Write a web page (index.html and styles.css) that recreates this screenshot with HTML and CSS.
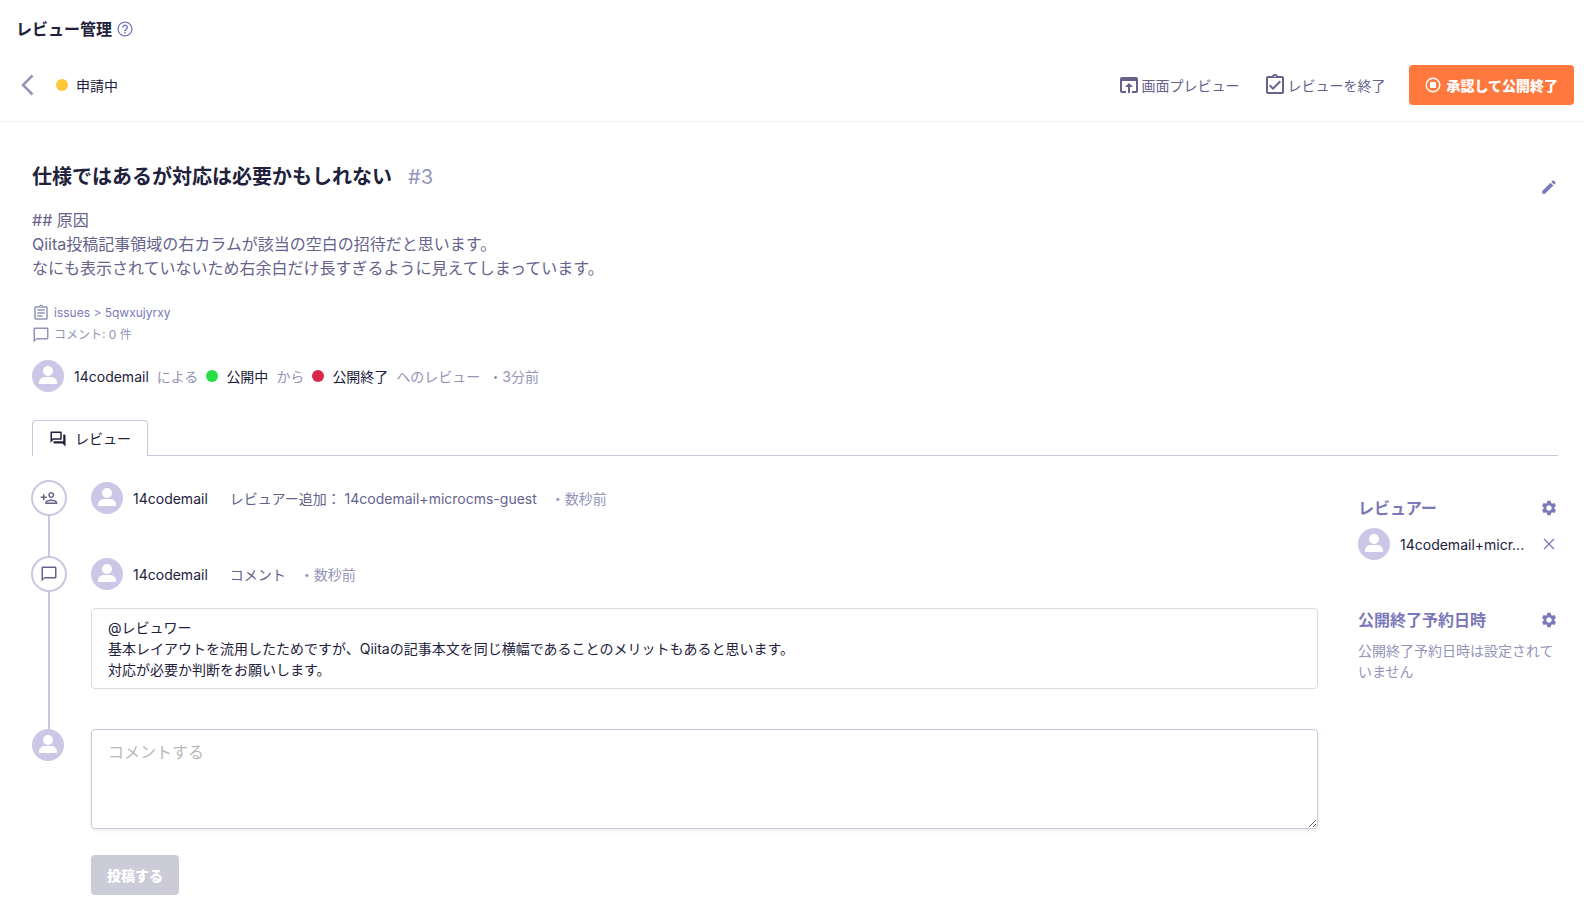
FILE: index.html
```html
<!DOCTYPE html>
<html lang="ja">
<head>
    <meta charset="UTF-8">
    <meta name="viewport" content="width=device-width, initial-scale=1.0">
    <title>レビュー管理</title>
    <link rel="stylesheet" href="styles.css">
</head>
<body>
    <svg class="sprite" aria-hidden="true">
        <symbol id="avatar" viewBox="0 0 32 32">
            <circle cx="16" cy="16" r="16" fill="#cac8e6"/>
            <circle cx="16" cy="11" r="5" fill="#fff"/>
            <path fill="#fff" d="M7 24v-1.5c0-3.5 3-5.5 6.5-5.5h5c3.5 0 6.5 2 6.5 5.5V24z"/>
        </symbol>
        <symbol id="chat" viewBox="0 0 24 24">
            <path d="M20 2H4c-1.1 0-2 .9-2 2v18l4-4h14c1.1 0 2-.9 2-2V4c0-1.1-.9-2-2-2zm0 14H6l-2 2V4h16v12z"/>
        </symbol>
        <symbol id="gear" viewBox="0 0 24 24">
            <path d="M19.14 12.94c.04-.3.06-.61.06-.94 0-.32-.02-.64-.07-.94l2.03-1.58c.18-.14.23-.41.12-.61l-1.92-3.32c-.12-.22-.37-.29-.59-.22l-2.39.96c-.5-.38-1.03-.7-1.62-.94l-.36-2.54c-.04-.24-.24-.41-.48-.41h-3.84c-.24 0-.43.17-.47.41l-.36 2.54c-.59.24-1.13.57-1.62.94l-2.39-.96c-.22-.08-.47 0-.59.22L2.74 8.87c-.12.21-.08.47.12.61l2.03 1.58c-.05.3-.09.63-.09.94s.02.64.07.94l-2.03 1.58c-.18.14-.23.41-.12.61l1.92 3.32c.12.22.37.29.59.22l2.39-.96c.5.38 1.03.7 1.62.94l.36 2.54c.05.24.24.41.48.41h3.84c.24 0 .44-.17.47-.41l.36-2.54c.59-.24 1.13-.56 1.62-.94l2.39.96c.22.08.47 0 .59-.22l1.92-3.32c.12-.22.07-.47-.12-.61l-2.01-1.58zM12 15.6c-1.98 0-3.6-1.62-3.6-3.6s1.62-3.6 3.6-3.6 3.6 1.62 3.6 3.6-1.62 3.6-3.6 3.6z"/>
        </symbol>
    </svg>

    <header class="page-header">
        <h1 class="page-title">レビュー管理</h1>
        <a href="#" class="help" aria-label="ヘルプ">
            <svg class="icon" viewBox="0 0 24 24"><path d="M11 18h2v-2h-2v2zm1-16C6.48 2 2 6.48 2 12s4.48 10 10 10 10-4.48 10-10S17.52 2 12 2zm0 18.3c-4.6 0-8.3-3.7-8.3-8.3S7.4 3.7 12 3.7s8.3 3.7 8.3 8.3-3.7 8.3-8.3 8.3zm0-14.3c-2.21 0-4 1.79-4 4h2c0-1.1.9-2 2-2s2 .9 2 2c0 2-3 1.75-3 5h2c0-2.25 3-2.5 3-5 0-2.21-1.79-4-4-4z"/></svg>
        </a>
    </header>

    <div class="toolbar">
        <div class="toolbar-left">
            <button type="button" class="back" aria-label="戻る">
                <svg width="24" height="24" viewBox="0 0 24 24"><path d="M16.500 2.500L7 12l9.500 9.500" fill="none" stroke="currentColor" stroke-width="2.500"/></svg>
            </button>
            <span class="dot yellow"></span>
            <span>申請中</span>
        </div>
        <div class="toolbar-right">
            <button type="button" class="text-button">
                <svg class="icon-large" viewBox="0 0 24 24"><path d="M19 4H5c-1.11 0-2 .9-2 2v12c0 1.1.89 2 2 2h4v-2H5V8h14v10h-4v2h4c1.1 0 2-.9 2-2V6c0-1.1-.89-2-2-2zm-7 6l-4 4h3v6h2v-6h3l-4-4z"/></svg>画面プレビュー
            </button>
            <button type="button" class="text-button">
                <svg class="icon-large" viewBox="0 0 24 24"><path d="M18 9l-1.41-1.42L10 14.17l-2.59-2.58L6 13l4 4zm1-6h-4.18C14.4 1.84 13.3 1 12 1s-2.4.84-2.82 2H5c-1.1 0-2 .9-2 2v14c0 1.1.9 2 2 2h14c1.1 0 2-.9 2-2V5c0-1.1-.9-2-2-2zm-7-.25c.41 0 .75.34.75.75s-.34.75-.75.75-.75-.34-.75-.75.34-.75.75-.75zM19 19H5V5h14v14z"/></svg>レビューを終了
            </button>
            <button type="button" class="button primary">
                <svg width="16" height="16" viewBox="0 0 16 16"><circle cx="8" cy="8" r="6.8" fill="none" stroke="currentColor" stroke-width="1.4"/><rect x="5" y="5" width="6" height="6" rx="0.5" fill="currentColor"/></svg>承認して公開終了
            </button>
        </div>
    </div>

    <main class="main">
        <div class="review-head">
            <div>
                <h2 class="review-title">仕様ではあるが対応は必要かもしれない <span class="number">#3</span></h2>
                <p class="description">## 原因<br>Qiita投稿記事領域の右カラムが該当の空白の招待だと思います。<br>なにも表示されていないため右余白だけ長すぎるように見えてしまっています。</p>
            </div>
            <button type="button" class="edit" aria-label="編集">
                <svg class="icon" viewBox="0 0 24 24"><path d="M3 17.25V21h3.75L17.81 9.94l-3.75-3.75L3 17.25zM20.71 7.04c.39-.39.39-1.02 0-1.41l-2.34-2.34c-.39-.39-1.02-.39-1.41 0l-1.83 1.83 3.75 3.75 1.83-1.83z"/></svg>
            </button>
        </div>

        <div class="meta">
            <div class="meta-row">
                <svg class="icon" viewBox="0 0 24 24"><path d="M7 15h7v2H7zm0-4h10v2H7zm0-4h10v2H7zM19 3h-4.18C14.4 1.84 13.3 1 12 1s-2.4.84-2.82 2H5c-1.1 0-2 .9-2 2v14c0 1.1.9 2 2 2h14c1.1 0 2-.9 2-2V5c0-1.1-.9-2-2-2zm-7-.25c.41 0 .75.34.75.75s-.34.75-.75.75-.75-.34-.75-.75.34-.75.75-.75zM19 19H5V5h14v14z"/></svg>
                <a href="#">issues &gt; 5qwxujyrxy</a>
            </div>
            <div class="meta-row">
                <svg class="icon"><use href="#chat"/></svg>
                <span>コメント: 0 件</span>
            </div>
        </div>

        <div class="summary">
            <svg class="avatar"><use href="#avatar"/></svg>
            <span class="name">14codemail</span>
            <span>による</span>
            <span class="dot green"></span>
            <span class="name">公開中</span>
            <span>から</span>
            <span class="dot red"></span>
            <span class="name">公開終了</span>
            <span>へのレビュー</span>
            <span>・3分前</span>
        </div>

        <div class="tabs" role="tablist">
            <button type="button" class="tab" role="tab" aria-selected="true">
                <svg class="icon" viewBox="0 0 24 24"><path d="M15 4v7H5.17L4 12.17V4h11m1-2H3c-.55 0-1 .45-1 1v14l4-4h10c.55 0 1-.45 1-1V3c0-.55-.45-1-1-1zm5 4h-2v9H6v2c0 .55.45 1 1 1h11l4 4V7c0-.55-.45-1-1-1z"/></svg>レビュー
            </button>
            <div class="tabs-line"></div>
        </div>

        <div class="columns">
            <div class="timeline">
                <div class="item">
                    <div class="track">
                        <span class="marker">
                            <svg class="icon" viewBox="0 0 24 24"><path d="M15 12c2.21 0 4-1.79 4-4s-1.79-4-4-4-4 1.79-4 4 1.79 4 4 4zm0-6c1.1 0 2 .9 2 2s-.9 2-2 2-2-.9-2-2 .9-2 2-2zm0 8c-2.67 0-8 1.34-8 4v2h16v-2c0-2.66-5.33-4-8-4zm-6 4c.22-.72 3.31-2 6-2 2.7 0 5.8 1.29 6 2H9zm-3-3v-3h3v-2H6V7H4v3H1v2h3v3z"/></svg>
                        </span>
                    </div>
                    <div class="item-body">
                        <div class="event">
                            <svg class="avatar"><use href="#avatar"/></svg>
                            <span class="name">14codemail</span>
                            <span class="action">レビュアー追加： 14codemail+microcms-guest</span>
                            <span class="time">・数秒前</span>
                        </div>
                    </div>
                </div>
                <div class="item">
                    <div class="track">
                        <span class="marker">
                            <svg class="icon"><use href="#chat"/></svg>
                        </span>
                    </div>
                    <div class="item-body">
                        <div class="event">
                            <svg class="avatar"><use href="#avatar"/></svg>
                            <span class="name">14codemail</span>
                            <span class="action">コメント</span>
                            <span class="time">・数秒前</span>
                        </div>
                        <p class="comment">@レビュワー<br>基本レイアウトを流用したためですが、Qiitaの記事本文を同じ横幅であることのメリットもあると思います。<br>対応が必要か判断をお願いします。</p>
                    </div>
                </div>
                <form class="comment-form">
                    <div class="form-avatar">
                        <svg class="avatar"><use href="#avatar"/></svg>
                    </div>
                    <div class="form-body">
                        <textarea class="comment-input" placeholder="コメントする" aria-label="コメントする"></textarea>
                        <button type="submit" class="button" disabled>投稿する</button>
                    </div>
                </form>
            </div>

            <aside class="sidebar">
                <section>
                    <div class="side-head">
                        <h3>レビュアー</h3>
                        <button type="button" aria-label="レビュアーを設定"><svg class="icon"><use href="#gear"/></svg></button>
                    </div>
                    <div class="reviewer">
                        <svg class="avatar"><use href="#avatar"/></svg>
                        <span class="reviewer-name">14codemail+micr...</span>
                        <button type="button" aria-label="レビュアーを削除">
                            <svg width="18" height="18" viewBox="0 0 18 18"><path d="M4 4l10 10M14 4L4 14" fill="none" stroke="currentColor" stroke-width="1.3"/></svg>
                        </button>
                    </div>
                </section>
                <section>
                    <div class="side-head">
                        <h3>公開終了予約日時</h3>
                        <button type="button" aria-label="公開終了予約日時を設定"><svg class="icon"><use href="#gear"/></svg></button>
                    </div>
                    <p class="side-text">公開終了予約日時は設定されていません</p>
                </section>
            </aside>
        </div>
    </main>
</body>
</html>
```
FILE: styles.css
```css
* {
    box-sizing: border-box;
}
body {
    margin: 0;
    font-family: Inter, "Noto Sans CJK JP", sans-serif;
    font-size: 14px;
    line-height: 21px;
    color: #21213b;
    background: #fff;
}
h1, h2, h3, p {
    margin: 0;
}
button {
    padding: 0;
    border: none;
    background: none;
    color: inherit;
    font: inherit;
    cursor: pointer;
}
svg {
    display: block;
    flex-shrink: 0;
}
.sprite {
    display: none;
}
.icon {
    width: 18px;
    height: 18px;
    fill: currentColor;
}
.icon-large {
    width: 24px;
    height: 24px;
    fill: currentColor;
}
.avatar {
    width: 32px;
    height: 32px;
}
.dot {
    width: 12px;
    height: 12px;
    border-radius: 50%;
    flex-shrink: 0;
}
.yellow {
    background: #ffc63a;
}
.green {
    background: #28de46;
}
.red {
    background: #dc2649;
}

/* ヘッダー */
.page-header {
    display: flex;
    align-items: center;
    gap: 4px;
    padding: 17px 16px 8px;
}
.page-title {
    font-size: 16px;
    line-height: 24px;
    font-weight: bold;
}
.help {
    color: #7b79bd;
}
.toolbar {
    display: flex;
    justify-content: space-between;
    align-items: center;
    padding: 16px 10px 16px 16px;
    border-bottom: 1px solid #f2f2f4;
}
.toolbar-left {
    display: flex;
    align-items: center;
    gap: 8px;
}
.back {
    margin-right: 8px;
    color: #9594b8;
}
.toolbar-right {
    display: flex;
    align-items: center;
    gap: 24px;
}
.text-button {
    display: flex;
    align-items: center;
    color: #65638c;
}
.button {
    display: flex;
    align-items: center;
    gap: 5px;
    height: 40px;
    padding: 0 16px;
    border-radius: 4px;
    color: #fff;
    font-weight: 900;
}
.button:disabled {
    background: #cccbd8;
    cursor: default;
}
.primary {
    background: #ff793f;
}

/* レビュー内容 */
.main {
    padding: 40px 26px 16px 32px;
}
.review-head {
    display: flex;
    justify-content: space-between;
    align-items: flex-start;
}
.review-title {
    display: flex;
    gap: 16px;
    font-size: 20px;
    line-height: 30px;
    font-weight: bold;
}
.number {
    color: #9695bd;
    font-weight: normal;
}
.description {
    margin-top: 16px;
    font-size: 16px;
    line-height: 24px;
    color: #65638c;
}
.edit {
    padding: 16px 0;
    color: #7b79b9;
}
.meta {
    margin-top: 22px;
    font-size: 12px;
    line-height: 22px;
    color: #9594b8;
}
.meta-row {
    display: flex;
    align-items: center;
    gap: 4px;
}
.meta a {
    color: #7b79b9;
    text-decoration: none;
}
.summary {
    display: flex;
    align-items: center;
    gap: 8px;
    margin-top: 14px;
    color: #9594b8;
}
.summary .avatar {
    margin-right: 2px;
}
.name {
    color: #21213b;
}

/* タブ */
.tabs {
    display: flex;
    margin-top: 28px;
}
.tab {
    display: flex;
    align-items: center;
    gap: 8px;
    height: 36px;
    padding: 0 16px;
    border: 1px solid #cac8e0;
    border-bottom: none;
    border-radius: 4px 4px 0 0;
}
.tabs-line {
    flex: 1;
    border-bottom: 1px solid #cac8e0;
}

/* タイムライン */
.columns {
    display: flex;
    gap: 40px;
    margin-top: 24px;
}
.timeline {
    flex: 1;
    min-width: 0;
}
.item, .comment-form {
    display: flex;
    gap: 25px;
}
.track {
    display: flex;
    flex-direction: column;
    align-items: center;
    width: 34px;
}
.track::after {
    content: "";
    flex: 1;
    width: 2px;
    background: #cac8e0;
}
.marker {
    display: flex;
    align-items: center;
    justify-content: center;
    width: 36px;
    height: 36px;
    border: 2px solid #cac8e0;
    border-radius: 50%;
    color: #65638c;
}
.item-body {
    flex: 1;
    padding-bottom: 40px;
}
.event {
    display: flex;
    align-items: center;
    height: 36px;
}
.event .name {
    margin-left: 10px;
}
.action {
    margin-left: 22px;
    color: #65638c;
}
.time {
    margin-left: 14px;
    color: #9594b8;
}
.comment {
    margin-top: 16px;
    padding: 8px 16px;
    border: 1px solid #dcdce0;
    border-radius: 4px;
}
.form-avatar {
    width: 34px;
}
.form-body {
    flex: 1;
}
.comment-input {
    display: block;
    width: 100%;
    height: 100px;
    margin-bottom: 26px;
    padding: 10px 16px;
    border: 1px solid #cac8e0;
    border-radius: 4px;
    box-shadow: 0 2px 4px rgba(100, 100, 140, 0.1);
    font: inherit;
    font-size: 16px;
    line-height: 24px;
    color: inherit;
    resize: vertical;
}
.comment-input::placeholder {
    color: #b8b8b8;
}

/* サイドバー */
.sidebar {
    width: 200px;
    padding-top: 16px;
}
.sidebar section {
    margin-bottom: 48px;
}
.sidebar button {
    color: #7b79b9;
}
.side-head {
    display: flex;
    align-items: center;
    justify-content: space-between;
    margin-bottom: 8px;
}
.side-head h3 {
    font-size: 16px;
    line-height: 24px;
    color: #7b79b9;
}
.reviewer {
    display: flex;
    align-items: center;
    gap: 10px;
}
.reviewer-name {
    flex: 1;
    white-space: nowrap;
}
.side-text {
    color: #9594b8;
}
```
